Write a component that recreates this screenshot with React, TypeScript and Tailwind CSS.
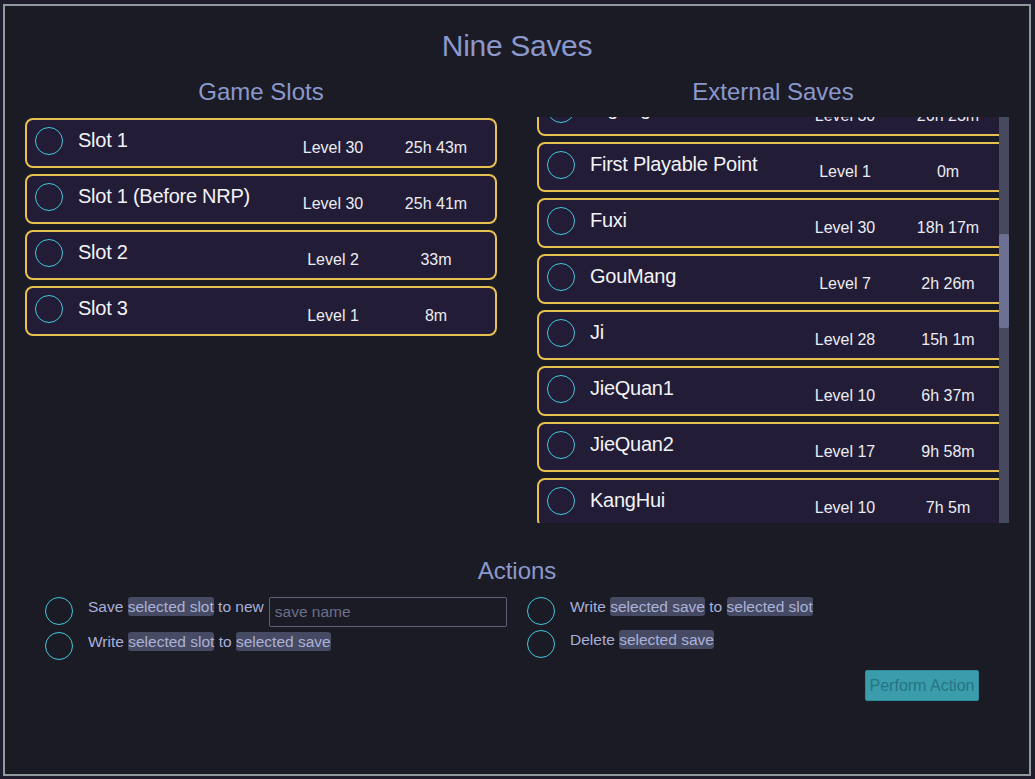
import React from "react";

type Save = { name: string; level: number; time: string };

const slots: Save[] = [
  { name: "Slot 1", level: 30, time: "25h 43m" },
  { name: "Slot 1 (Before NRP)", level: 30, time: "25h 41m" },
  { name: "Slot 2", level: 2, time: "33m" },
  { name: "Slot 3", level: 1, time: "8m" },
];

const externals: Save[] = [
  { name: "Eigong", level: 30, time: "26h 23m" },
  { name: "First Playable Point", level: 1, time: "0m" },
  { name: "Fuxi", level: 30, time: "18h 17m" },
  { name: "GouMang", level: 7, time: "2h 26m" },
  { name: "Ji", level: 28, time: "15h 1m" },
  { name: "JieQuan1", level: 10, time: "6h 37m" },
  { name: "JieQuan2", level: 17, time: "9h 58m" },
  { name: "KangHui", level: 10, time: "7h 5m" },
  { name: "Kuafu", level: 12, time: "8h 2m" },
];

function Circle({ className = "" }: { className?: string }) {
  return <div className={`h-7 w-7 shrink-0 rounded-full border-[1.25px] border-[#44c8da] ${className}`} />;
}

function Card({ s }: { s: Save }) {
  return (
    <div className="flex h-[50px] shrink-0 items-start rounded-lg border-2 border-[#e6c14f] bg-[#221c36] pl-2 pr-[9px]">
      <Circle className="mt-[7px]" />
      <div className="ml-[15px] mt-[6px] flex-1 whitespace-nowrap text-[20px] leading-7 tracking-[-0.25px] text-[#f3f3f6]">{s.name}</div>
      <div className="mt-4 w-[100px] shrink-0 text-center text-[16px] leading-6 text-[#ececf2]">Level {s.level}</div>
      <div className="ml-[3px] mt-4 w-[100px] shrink-0 text-center text-[16px] leading-6 text-[#ececf2]">{s.time}</div>
    </div>
  );
}

function Hl({ children }: { children: React.ReactNode }) {
  return <span className="rounded-[3px] bg-[#464a62] py-[1px] text-[#abb2d8]">{children}</span>;
}

export default function App() {
  return (
    <div className="min-h-screen bg-[#1e1c2d] pl-[3px] pt-[4px] font-['Liberation_Sans',Arial,sans-serif]">
      <div className="h-[772px] w-[1028px] border-2 border-[#8e9a9c] bg-[#1b1b26] px-5 pt-[22px]">
        <h1 className="text-center text-[30px] leading-[36px] tracking-[-0.3px] text-[#8b98cb]">Nine Saves</h1>
        <div className="mt-3 grid grid-cols-2 gap-10">
          <div>
            <h2 className="text-center text-[24px] leading-8 text-[#8b98cb]">Game Slots</h2>
            <div className="mt-[9px] flex h-[406px] flex-col gap-[6px] pt-[1px]">
              {slots.map((s) => (
                <Card key={s.name} s={s} />
              ))}
            </div>
          </div>
          <div>
            <h2 className="text-center text-[24px] leading-8 text-[#8b98cb]">External Saves</h2>
            <div className="relative mt-[9px] h-[406px] overflow-hidden">
              <div className="-mt-[31px] flex flex-col gap-[6px]">
                {externals.map((s) => (
                  <Card key={s.name} s={s} />
                ))}
              </div>
              <div className="absolute right-0 top-0 h-full w-[10px] bg-[#474a5f]">
                <div className="absolute left-0 top-[117px] h-[94px] w-full rounded-[2px] bg-[#6c7194]" />
              </div>
            </div>
          </div>
        </div>

        <h2 className="mt-8 text-center text-[24px] leading-8 text-[#8b98cb]">Actions</h2>
        <div className="px-5">
          <div className="mt-[10px] grid grid-cols-2 text-[15.5px] leading-5 text-[#a8b0d8]">
            <div className="flex flex-col gap-[5px] pr-[10px]">
              <div className="flex items-start">
                <Circle />
                <div className="ml-[15px] whitespace-nowrap">
                  Save <Hl>selected slot</Hl> to new
                </div>
                <input
                  placeholder="save name"
                  className="ml-[5px] h-[30px] min-w-0 flex-1 rounded-[2px] border border-[#5c6078] bg-transparent px-[5px] text-[15.5px] text-[#a8b0d8] outline-none placeholder:text-[#6b6f8c]"
                />
              </div>
              <div className="flex items-start">
                <Circle />
                <div className="ml-[15px] whitespace-nowrap">
                  Write <Hl>selected slot</Hl> to <Hl>selected save</Hl>
                </div>
              </div>
            </div>
            <div className="flex flex-col gap-[5px] pl-[10px]">
              <div className="flex items-start">
                <Circle />
                <div className="ml-[15px] whitespace-nowrap">
                  Write <Hl>selected save</Hl> to <Hl>selected slot</Hl>
                </div>
              </div>
              <div className="flex items-start">
                <Circle />
                <div className="ml-[15px] whitespace-nowrap">
                  Delete <Hl>selected save</Hl>
                </div>
              </div>
            </div>
          </div>
          <div className="mt-[10px] flex justify-end pr-[10px]">
            <button className="h-[31px] w-[114px] whitespace-nowrap rounded-[2px] border border-[#2f8c98] bg-[#3b9dab] text-[16px] text-[#257583]">
              Perform Action
            </button>
          </div>
        </div>
      </div>
    </div>
  );
}
